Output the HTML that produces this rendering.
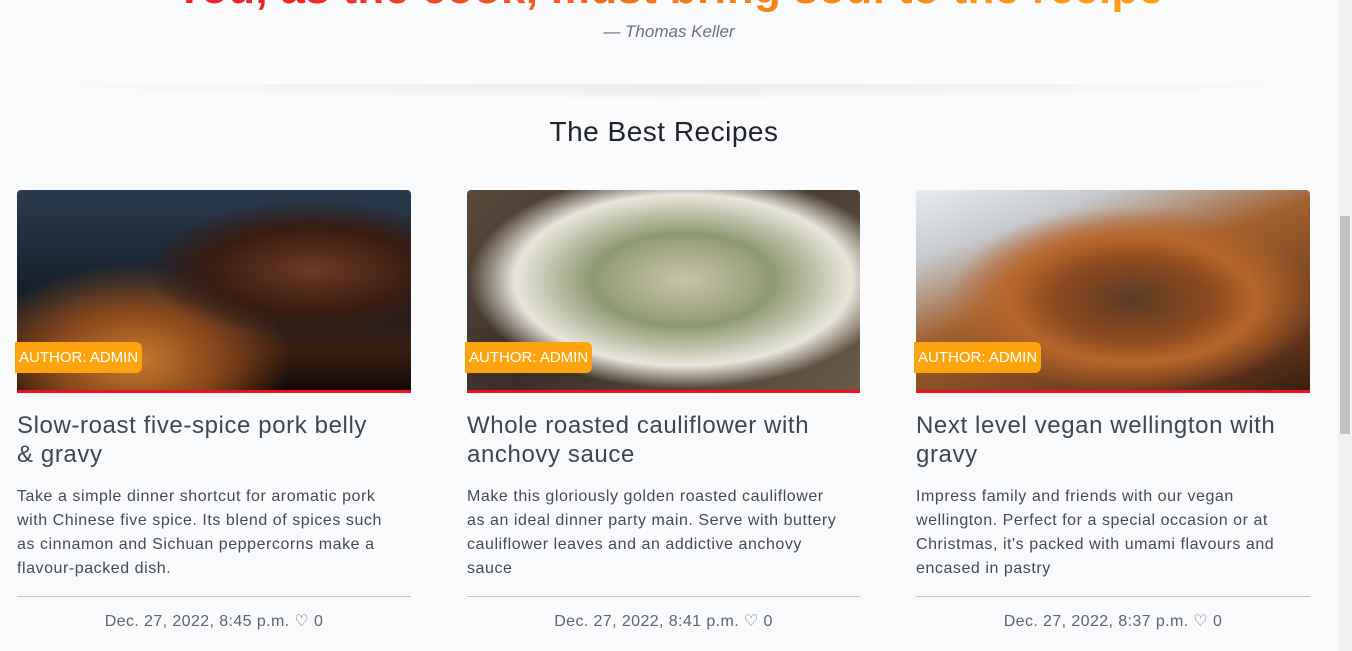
<!DOCTYPE html>
<html><head><style>
html,body{margin:0;padding:0;}
body{width:1352px;height:651px;overflow:hidden;background:#f9fafc;font-family:"Liberation Sans",sans-serif;position:relative;}
.quote{position:absolute;left:0;width:1338px;top:-35px;text-align:center;font-size:44px;font-weight:bold;line-height:48px;letter-spacing:0.3px;background:linear-gradient(90deg,#f0232a 20%,#f47a1c 50%,#fb9d15 80%);-webkit-background-clip:text;background-clip:text;color:transparent;}
.auth{position:absolute;left:0;width:1338px;top:22px;text-align:center;font-style:italic;font-size:17px;color:#6b7280;}
.shadow{position:absolute;left:0;width:1338px;top:84px;height:16px;background:radial-gradient(ellipse at 50% 0%,rgba(0,0,0,.07),rgba(0,0,0,0) 70%);}
h2{position:absolute;left:0;width:1328px;top:116px;margin:0;text-align:center;font-weight:normal;font-size:28px;letter-spacing:0.5px;color:#212529;}
.card{position:absolute;top:190px;width:394px;}
.img{height:200px;border-radius:4px 4px 0 0;border-bottom:3px solid #f0101a;position:relative;}
.badge{position:absolute;left:-2px;top:152px;background:#fca40d;color:#fff;font-size:15px;padding:6px 4px 6px 4px;border-radius:0 6px 6px 0;line-height:19px;}
.t{margin:18px 0 0;font-size:24px;line-height:29px;color:#3c4754;font-weight:normal;white-space:nowrap;letter-spacing:0.6px;}
.d{margin:16px 0 0;font-size:16px;line-height:24px;color:#444b54;height:96px;white-space:nowrap;letter-spacing:0.55px;}
.hr{margin-top:15px;border-top:1px solid #c4c4c4;}
.date{text-align:center;margin-top:14px;font-size:16px;color:#5c6570;letter-spacing:0.4px;}
.sb{position:absolute;right:0;top:0;width:14px;height:651px;background:#f1f1f1;}
.th{position:absolute;right:2px;top:216px;width:10px;height:218px;background:#c1c1c1;}
</style></head><body>
<div class="quote">You, as the cook, must bring soul to the recipe</div>
<div class="auth">— Thomas Keller</div>
<div class="shadow"></div>
<h2>The Best Recipes</h2>

<div class="card" style="left:17px">
<div class="img" style="background:radial-gradient(ellipse at 75% 40%,#6b3a22 0,#3a1c10 25%,transparent 40%),radial-gradient(ellipse at 30% 85%,#c77a30 0,#8a4a1c 20%,transparent 40%),linear-gradient(180deg,#2a3a4e 0%,#16202c 50%,#3a1e10 80%,#120806 100%);"><div class="badge">AUTHOR: ADMIN</div></div>
<h3 class="t">Slow-roast five-spice pork belly<br>&amp; gravy</h3>
<p class="d">Take a simple dinner shortcut for aromatic pork<br>with Chinese five spice. Its blend of spices such<br>as cinnamon and Sichuan peppercorns make a<br>flavour-packed dish.</p>
<div class="hr"></div>
<div class="date">Dec. 27, 2022, 8:45 p.m. ♡ 0</div>
</div>

<div class="card" style="left:467px;width:393px">
<div class="img" style="background:radial-gradient(ellipse at 55% 45%,#c9c5a8 0,#8f9a70 30%,#e8e6dc 55%,transparent 70%),linear-gradient(135deg,#5a4a3c,#3a2e26 40%,#6a5a48);"><div class="badge">AUTHOR: ADMIN</div></div>
<h3 class="t">Whole roasted cauliflower with<br>anchovy sauce</h3>
<p class="d">Make this gloriously golden roasted cauliflower<br>as an ideal dinner party main. Serve with buttery<br>cauliflower leaves and an addictive anchovy<br>sauce</p>
<div class="hr"></div>
<div class="date">Dec. 27, 2022, 8:41 p.m. ♡ 0</div>
</div>

<div class="card" style="left:916px">
<div class="img" style="background:radial-gradient(ellipse at 55% 55%,#5a3a22 0,#8a4a20 25%,#b5652a 40%,transparent 60%),linear-gradient(160deg,#e8ecef 0%,#c8ccd0 20%,#a0602e 45%,#6a3a1c 80%,#3a2010);"><div class="badge">AUTHOR: ADMIN</div></div>
<h3 class="t">Next level vegan wellington with<br>gravy</h3>
<p class="d">Impress family and friends with our vegan<br>wellington. Perfect for a special occasion or at<br>Christmas, it's packed with umami flavours and<br>encased in pastry</p>
<div class="hr"></div>
<div class="date">Dec. 27, 2022, 8:37 p.m. ♡ 0</div>
</div>

<div class="sb"><div class="th"></div></div>
</body></html>
